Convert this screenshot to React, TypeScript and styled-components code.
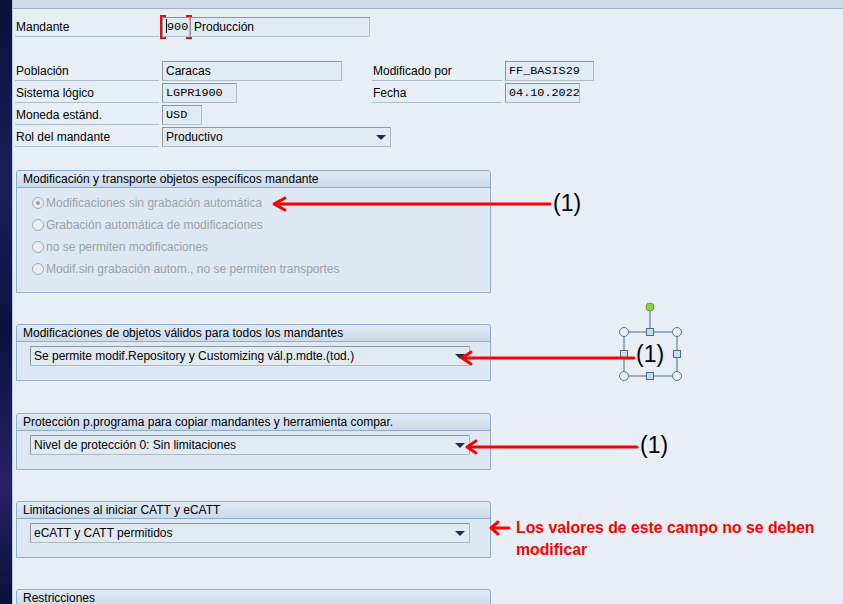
import styled, { createGlobalStyle } from 'styled-components';

const GlobalStyle = createGlobalStyle`
  html, body {
    margin: 0;
    padding: 0;
    background: #e8eef6;
  }
  * {
    box-sizing: border-box;
  }
`;

const Screen = styled.div`
  position: relative;
  width: 843px;
  height: 604px;
  overflow: hidden;
  display: flex;
  font-family: "Liberation Sans", Arial, sans-serif;
  font-size: 12px;
  color: #000;
`;

const Strip = styled.div`
  width: 13px;
  flex-shrink: 0;
  background: linear-gradient(160deg, #0a1238 0%, #1a1f5c 30%, #0b143f 55%, #2a1f66 80%, #0a1238 100%);
  border-right: 1px solid #b9c7d6;
`;

const Main = styled.div`
  flex: 1;
  display: flex;
  flex-direction: column;
  background: #e8eef6;
`;

const TopBand = styled.div`
  height: 9px;
  flex-shrink: 0;
  background: #cfdbe7;
  border-bottom: 1px solid #9fb1c4;
`;

const Content = styled.div`
  padding: 8px 0 0 2px;
  display: flex;
  flex-direction: column;
  flex-shrink: 0;
`;

const Row = styled.div`
  display: flex;
  align-items: center;
  height: 20px;
`;

const HeaderGrid = styled.div`
  margin-top: 24px;
  display: grid;
  grid-template-columns: 147px 210px 133px 1fr;
  grid-auto-rows: 20px;
  row-gap: 2px;
  align-items: center;
`;

const Label = styled.div<{ $w?: number }>`
  height: 20px;
  line-height: 20px;
  width: ${({ $w }) => ($w ? `${$w}px` : 'auto')};
  margin-right: 3px;
  padding-left: 1px;
  border-bottom: 1px solid #aebccb;
  white-space: nowrap;
`;

const Field = styled.div<{ $w: number; $mono?: boolean }>`
  position: relative;
  width: ${({ $w }) => $w}px;
  height: 20px;
  line-height: 18px;
  padding: 0 3px;
  background: #e0eaf4;
  border: 1px solid #b4bcc4;
  border-top-color: #8d959d;
  border-left-color: #8d959d;
  white-space: nowrap;
  overflow: hidden;
  font-family: ${({ $mono }) =>
    $mono ? '"Liberation Mono", "Courier New", monospace' : '"Liberation Sans", Arial, sans-serif'};
  font-size: ${({ $mono }) => ($mono ? '11.8px' : '12px')};
  color: #000;
`;

const FocusWrap = styled.div`
  position: relative;
  display: flex;

  &::before,
  &::after {
    content: '';
    position: absolute;
    top: -2px;
    bottom: -2px;
    width: 4px;
    border: 2px solid #e01010;
  }
  &::before {
    left: -2px;
    border-right: none;
  }
  &::after {
    right: -2px;
    border-left: none;
  }
`;

const Cursor = styled.span`
  display: inline-block;
  width: 1px;
  height: 14px;
  background: #000;
  vertical-align: -3px;
`;

const Select = styled.div<{ $w: number; $span?: number }>`
  grid-column: ${({ $span }) => ($span ? `span ${$span}` : 'auto')};
  width: ${({ $w }) => $w}px;
  height: 20px;
  display: flex;
  align-items: center;
  padding: 0 4px 0 3px;
  background: #e1eaf3;
  border: 1px solid #aeb6be;
  border-top-color: #8e969e;
  border-left-color: #8e969e;
  white-space: nowrap;
`;

const Caret = styled.span`
  margin-left: auto;
  width: 0;
  height: 0;
  border-left: 5px solid transparent;
  border-right: 5px solid transparent;
  border-top: 5px solid #1d2f4d;
`;

const Group = styled.section<{ $top: number }>`
  margin-top: ${({ $top }) => $top}px;
  margin-left: 1px;
  width: 475px;
  background: #dee8f2;
  border: 1px solid #8fadcb;
  border-radius: 3px 3px 0 0;
  flex-shrink: 0;
`;

const GroupTitle = styled.div`
  height: 17px;
  line-height: 16px;
  padding-left: 6px;
  background: linear-gradient(#dfe9f4, #cbdaea);
  border-bottom: 1px solid #8fadcb;
  border-radius: 3px 3px 0 0;
`;

const GroupBody = styled.div<{ $pb: number }>`
  padding: 4px 0 ${({ $pb }) => $pb}px 13px;
`;

const RadioRow = styled.div`
  height: 22px;
  display: flex;
  align-items: center;
  padding-left: 2px;
  color: #9aa2ac;
`;

const RadioDot = styled.span<{ $on?: boolean }>`
  position: relative;
  width: 12px;
  height: 12px;
  border-radius: 50%;
  border: 1px solid #a2aab2;
  background: #e9eef3;
  margin-right: 2px;
  flex-shrink: 0;

  &::after {
    content: '';
    display: ${({ $on }) => ($on ? 'block' : 'none')};
    position: absolute;
    left: 3px;
    top: 3px;
    width: 4px;
    height: 4px;
    border-radius: 50%;
    background: #9aa2ac;
  }
`;

const Overlay = styled.div`
  position: absolute;
  inset: 0;
  pointer-events: none;
`;

const Note = styled.span<{ $x: number; $y: number }>`
  position: absolute;
  left: ${({ $x }) => $x}px;
  top: ${({ $y }) => $y}px;
  font-family: "Liberation Sans", Arial, sans-serif;
  font-size: 23px;
  line-height: 26px;
  color: #000;
`;

const Warning = styled.div`
  position: absolute;
  left: 516px;
  top: 517px;
  font-family: "Liberation Sans", Arial, sans-serif;
  font-weight: bold;
  font-size: 15.8px;
  line-height: 22px;
  color: #ff0000;
`;

const radios = [
  'Modificaciones sin grabación automática',
  'Grabación automática de modificaciones',
  'no se permiten modificaciones',
  'Modif.sin grabación autom., no se permiten transportes',
];

const Arrow = ({ x1, x2, y, head = 9 }: { x1: number; x2: number; y: number; head?: number }) => (
  <g stroke="#ff0000" strokeWidth={3} fill="none" strokeLinecap="round">
    <line x1={x1 + 1} y1={y} x2={x2} y2={y} />
    <polyline points={`${x1 + head},${y - 6} ${x1},${y} ${x1 + head},${y + 6}`} strokeLinejoin="round" />
  </g>
);

const Handles = () => {
  const corners = [
    [624, 332],
    [677, 332],
    [624, 376],
    [677, 376],
  ];
  const mids = [
    [650, 332],
    [624, 354],
    [677, 354],
    [650, 376],
  ];
  return (
    <g>
      <rect x={624} y={332} width={53} height={44} fill="none" stroke="#4d6986" strokeWidth={1} />
      <line x1={650} y1={310} x2={650} y2={332} stroke="#4d6986" strokeWidth={1} />
      <circle cx={650} cy={307} r={4} fill="#8fd34a" stroke="#6a9a3a" strokeWidth={1} />
      {corners.map(([cx, cy]) => (
        <circle key={`c${cx}-${cy}`} cx={cx} cy={cy} r={4.5} fill="#e4f0f6" stroke="#587590" strokeWidth={1} />
      ))}
      {mids.map(([cx, cy]) => (
        <rect key={`m${cx}-${cy}`} x={cx - 3.5} y={cy - 3.5} width={7} height={7} fill="#bfe0f0" stroke="#4d6986" strokeWidth={1} />
      ))}
    </g>
  );
};

export default function App() {
  return (
    <>
      <GlobalStyle />
      <Screen>
        <Strip />
        <Main>
          <TopBand />
          <Content>
            <Row>
              <Label $w={144}>Mandante</Label>
              <FocusWrap>
                <Field $w={28} $mono>
                  <Cursor />900
                </Field>
              </FocusWrap>
              <Field $w={180}>Producción</Field>
            </Row>

            <HeaderGrid>
              <Label>Población</Label>
              <Field $w={180}>Caracas</Field>
              <Label>Modificado por</Label>
              <Field $w={89} $mono>FF_BASIS29</Field>

              <Label>Sistema lógico</Label>
              <Field $w={75} $mono>LGPR1900</Field>
              <Label>Fecha</Label>
              <Field $w={75} $mono>04.10.2022</Field>

              <Label>Moneda estánd.</Label>
              <Field $w={40} $mono>USD</Field>
              <span />
              <span />

              <Label>Rol del mandante</Label>
              <Select $w={229} $span={3}>
                Productivo
                <Caret />
              </Select>
            </HeaderGrid>

            <Group $top={23}>
              <GroupTitle>Modificación y transporte objetos específicos mandante</GroupTitle>
              <GroupBody $pb={12}>
                {radios.map((r, i) => (
                  <RadioRow key={r}>
                    <RadioDot $on={i === 0} />
                    {r}
                  </RadioRow>
                ))}
              </GroupBody>
            </Group>

            <Group $top={31}>
              <GroupTitle>Modificaciones de objetos válidos para todos los mandantes</GroupTitle>
              <GroupBody $pb={14}>
                <Select $w={440}>
                  Se permite modif.Repository y Customizing vál.p.mdte.(tod.)
                  <Caret />
                </Select>
              </GroupBody>
            </Group>

            <Group $top={32}>
              <GroupTitle>Protección p.programa para copiar mandantes y herramienta compar.</GroupTitle>
              <GroupBody $pb={14}>
                <Select $w={440}>
                  Nivel de protección 0: Sin limitaciones
                  <Caret />
                </Select>
              </GroupBody>
            </Group>

            <Group $top={31}>
              <GroupTitle>Limitaciones al iniciar CATT y eCATT</GroupTitle>
              <GroupBody $pb={14}>
                <Select $w={440}>
                  eCATT y CATT permitidos
                  <Caret />
                </Select>
              </GroupBody>
            </Group>

            <Group $top={31}>
              <GroupTitle>Restricciones</GroupTitle>
              <GroupBody $pb={40} />
            </Group>
          </Content>
        </Main>

        <Overlay>
          <svg width={843} height={604} style={{ position: 'absolute', left: 0, top: 0 }}>
            <Arrow x1={274} x2={550} y={204} head={11} />
            <Handles />
            <Arrow x1={462} x2={634} y={358} />
            <Arrow x1={467} x2={637} y={447} />
            <Arrow x1={491} x2={509} y={528} head={7} />
          </svg>
          <Note $x={553} $y={190}>(1)</Note>
          <Note $x={636} $y={341}>(1)</Note>
          <Note $x={640} $y={432}>(1)</Note>
          <Warning>
            Los valores de este campo no se deben
            <br />
            modificar
          </Warning>
        </Overlay>
      </Screen>
    </>
  );
}
